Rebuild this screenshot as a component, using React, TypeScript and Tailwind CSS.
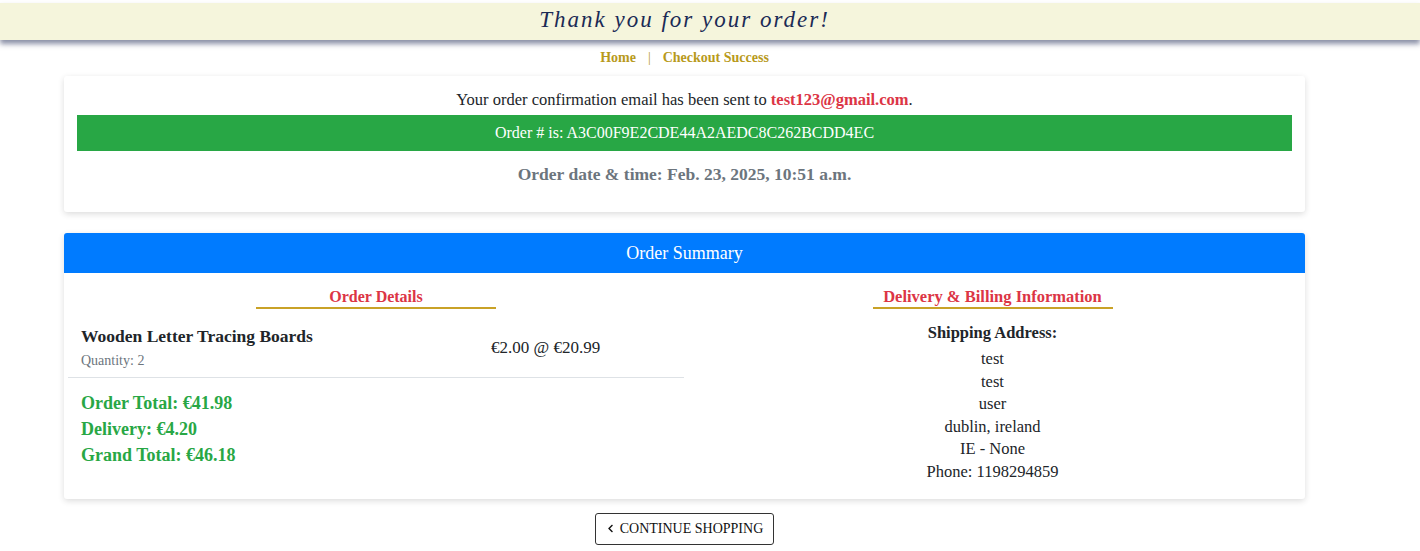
import { FaChevronLeft } from "react-icons/fa";

const serif = "font-['Liberation_Serif','DejaVu_Serif',serif]";

const addressLines = ["test", "test", "user", "dublin, ireland", "IE - None", "Phone: 1198294859"];

const SectionTitle = ({ children, width, size }: { children: string; width: string; size: string }) => (
  <div className="flex flex-col items-center">
    <h3 className={`${size} font-bold text-[#dc3545] leading-[20px]`}>{children}</h3>
    <div className={`${width} h-[2px] bg-[#c9a227]`} />
  </div>
);

export default function App() {
  return (
    <div className={`${serif} min-h-[551px] bg-white text-[#212529]`}>
      <div className="pt-[3px]">
        <div className="h-[37px] bg-[#f5f5dc] shadow-[0_4px_5px_rgba(45,55,95,0.55)]">
          <div className="w-[1369px] text-center">
            <h1 className="text-[23px] italic tracking-[2px] text-[#1b2a55] leading-[33px]">
              Thank you for your order!
            </h1>
          </div>
        </div>
      </div>

      <div className="w-[1369px]">
        <div className="flex justify-center gap-[12px] pt-[9px] text-[14px] font-bold text-[#b89a1c] leading-[18px]">
          <span>Home</span>
          <span className="font-normal">|</span>
          <span>Checkout Success</span>
        </div>

        <div className="mx-[64px] mt-[9px] bg-white shadow-[0_2px_6px_rgba(0,0,0,0.14)] rounded-[3px] px-[13px] pt-[13px] pb-[27px] text-center">
          <p className="text-[16.5px] leading-[22px]">
            Your order confirmation email has been sent to{" "}
            <strong className="text-[#dc3545]">test123@gmail.com</strong>.
          </p>
          <div className="mt-[4px] h-[36px] bg-[#28a745] text-white text-[16px] flex items-center justify-center">
            Order # is: A3C00F9E2CDE44A2AEDC8C262BCDD4EC
          </div>
          <p className="mt-[12px] text-[17.5px] font-bold text-[#6c757d] leading-[22px]">
            Order date &amp; time: Feb. 23, 2025, 10:51 a.m.
          </p>
        </div>

        <div className="mx-[64px] mt-[21px] bg-white shadow-[0_2px_6px_rgba(0,0,0,0.14)] rounded-[3px]">
          <div className="h-[40px] bg-[#007bff] text-white text-[18px] flex items-center justify-center rounded-t-[3px]">
            Order Summary
          </div>
          <div className="flex pb-[15px]">
            <div className="w-[620px] pl-[4px]">
              <div className="pt-[14px]">
                <SectionTitle width="w-[240px]" size="text-[16px]">Order Details</SectionTitle>
              </div>
              <div className="flex items-center px-[13px] pt-[16px] pb-[6px]">
                <div className="w-[410px]">
                  <p className="text-[17.5px] font-bold leading-[22px]">Wooden Letter Tracing Boards</p>
                  <p className="text-[14px] text-[#6c757d] leading-[20px] mt-[4px]">Quantity: 2</p>
                </div>
                <p className="text-[17px]">€2.00 @ €20.99</p>
              </div>
              <div className="h-px bg-[#dee2e6]" />
              <div className="px-[13px] pt-[12px] text-[18px] font-bold text-[#28a745] leading-[26px]">
                <p>Order Total: €41.98</p>
                <p>Delivery: €4.20</p>
                <p>Grand Total: €46.18</p>
              </div>
            </div>
            <div className="flex-1 text-center pt-[14px] pr-[4px]">
              <SectionTitle width="w-[240px]" size="text-[16.5px]">Delivery &amp; Billing Information</SectionTitle>
              <p className="mt-[13px] text-[16.5px] font-bold leading-[22px]">Shipping Address:</p>
              <div className="mt-[4px] text-[16.5px] leading-[22.6px]">
                {addressLines.map((line, i) => (
                  <p key={i}>{line}</p>
                ))}
              </div>
            </div>
          </div>
        </div>

        <div className="flex justify-center mt-[14px]">
          <button className="h-[32px] px-[10px] border border-[#333] rounded-[3px] flex items-center gap-[5px] text-[14px] text-[#111]">
            <FaChevronLeft className="w-[9px] h-[9px]" />
            CONTINUE SHOPPING
          </button>
        </div>
      </div>
    </div>
  );
}
